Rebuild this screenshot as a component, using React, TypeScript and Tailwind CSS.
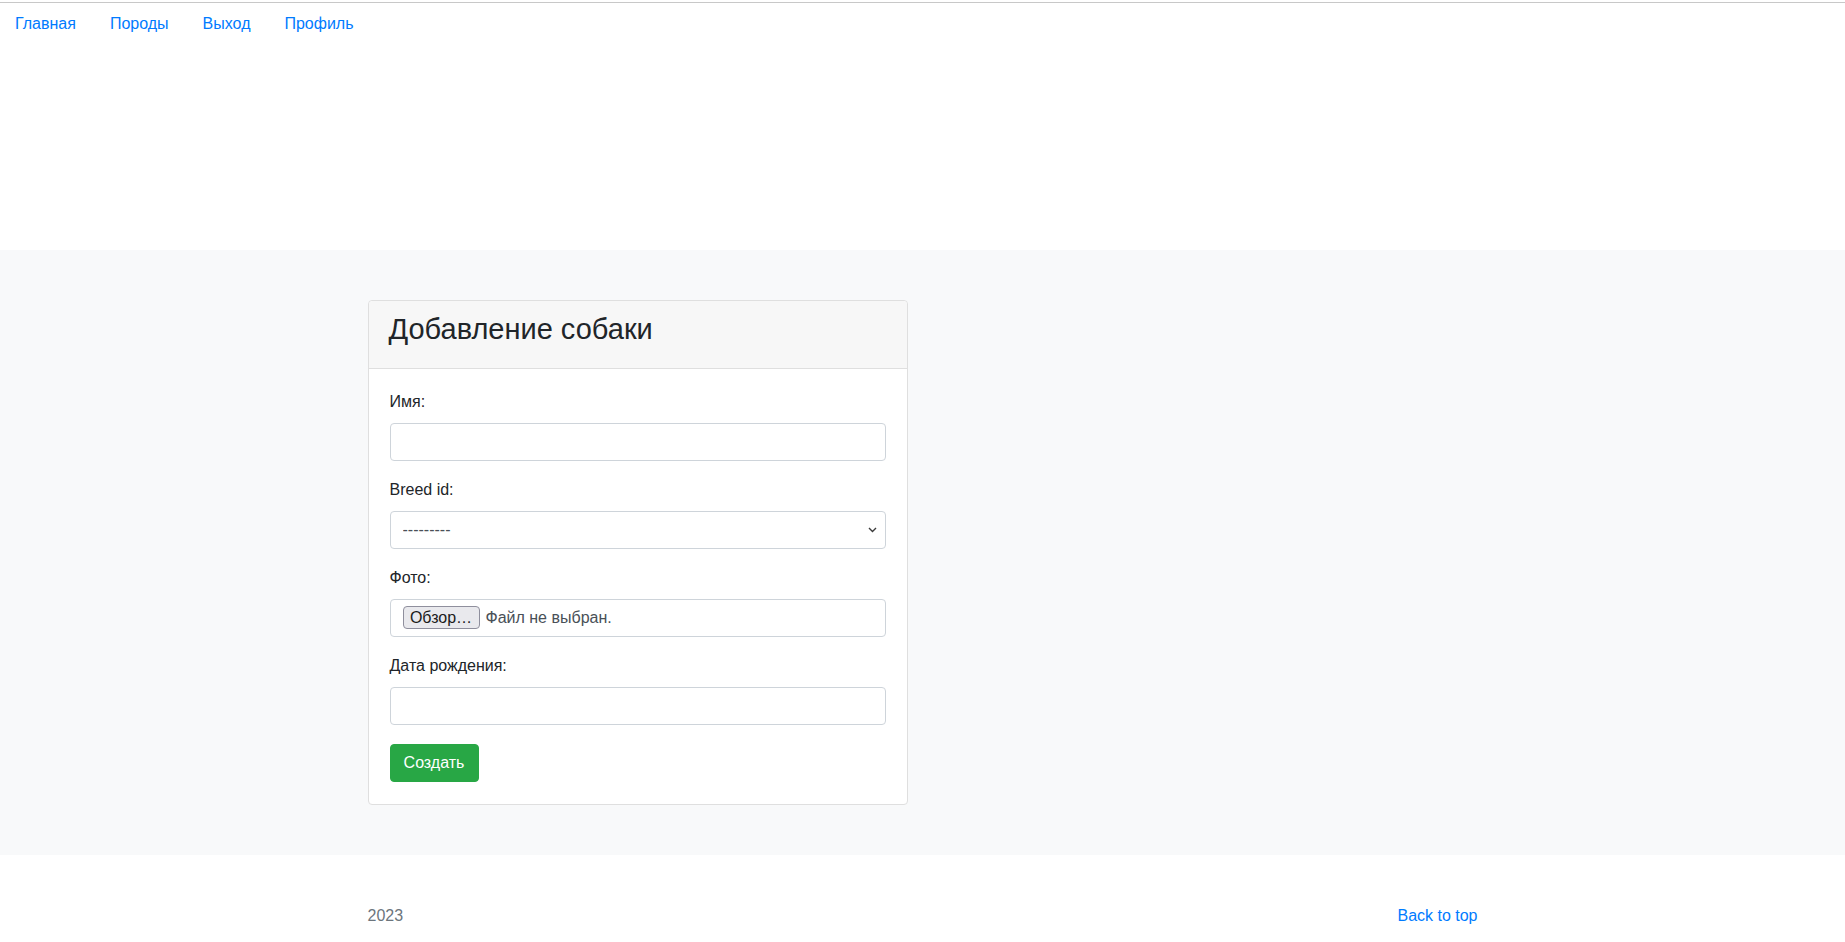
import React from 'react';

const font = { fontFamily: '"Liberation Sans", Arial, sans-serif' };

const links = ['Главная', 'Породы', 'Выход', 'Профиль'];

const Label: React.FC<{ children: React.ReactNode }> = ({ children }) => (
  <label className="block h-6 leading-6 text-base text-[#212529] mb-[9px]">{children}</label>
);

const App: React.FC = () => {
  return (
    <div className="min-h-screen bg-white text-[#212529]" style={font}>
      <header className="h-[250px]">
        <div className="pt-[2px]">
          <div className="h-px bg-[#c8c8c8]" />
        </div>
        <nav className="flex gap-[34px] pl-[15px] pt-[9px]">
          {links.map((l) => (
            <a key={l} href="#" className="text-base leading-6 text-[#007bff] hover:underline">
              {l}
            </a>
          ))}
        </nav>
      </header>

      <main className="bg-[#f8f9fa] py-[50px]">
        <div className="w-[1140px] mx-auto px-[15px]">
          <div className="w-[540px] bg-white border border-[#dfdfdf] rounded">
            <div className="bg-[#f7f7f7] border-b border-[#dfdfdf] px-[20px] pt-[12px] pb-[21px] rounded-t">
              <h3 className="text-[29px] leading-[33.6px] font-normal">Добавление собаки</h3>
            </div>
            <form className="px-[21px] pt-[21px] pb-[22px]" onSubmit={(e) => e.preventDefault()}>
              <div className="mb-[17px]">
                <Label>Имя:</Label>
                <input
                  type="text"
                  className="block w-full h-[38px] px-3 border border-[#ced4da] rounded text-base text-[#495057] outline-none"
                />
              </div>

              <div className="mb-[17px]">
                <Label>Breed id:</Label>
                <div className="relative">
                  <select className="block w-full h-[38px] pl-3 pr-8 border border-[#ced4da] rounded text-base text-[#495057] bg-white appearance-none outline-none">
                    <option>---------</option>
                  </select>
                  <svg
                    className="absolute right-[9px] top-[16px] pointer-events-none"
                    width="9"
                    height="6"
                    viewBox="0 0 9 6"
                    fill="none"
                  >
                    <path d="M1 1l3.5 3.5L8 1" stroke="#3b3b3b" strokeWidth="1.4" />
                  </svg>
                </div>
              </div>

              <div className="mb-[17px]">
                <Label>Фото:</Label>
                <div className="flex items-center w-full h-[38px] px-3 border border-[#ced4da] rounded bg-white">
                  <button
                    type="button"
                    className="w-[77px] h-[23px] bg-[#e9e9ed] border border-[#8f8f9d] rounded-[4px] text-base leading-none text-[#1b1b1b]"
                  >
                    Обзор…
                  </button>
                  <span className="ml-[6px] text-base text-[#495057]">Файл не выбран.</span>
                </div>
              </div>

              <div className="mb-[19px]">
                <Label>Дата рождения:</Label>
                <input
                  type="text"
                  className="block w-full h-[38px] px-3 border border-[#ced4da] rounded text-base text-[#495057] outline-none"
                />
              </div>

              <button
                type="submit"
                className="w-[89px] h-[38px] bg-[#28a745] border border-[#28a745] rounded text-base text-white"
              >
                Создать
              </button>
            </form>
          </div>
        </div>
      </main>

      <footer className="pt-[49px] pb-12 text-[#6c757d]">
        <div className="w-[1140px] mx-auto px-[15px] flex justify-between text-base leading-6">
          <p>2023</p>
          <a href="#" className="text-[#007bff] hover:underline">
            Back to top
          </a>
        </div>
      </footer>
    </div>
  );
};

export default App;
